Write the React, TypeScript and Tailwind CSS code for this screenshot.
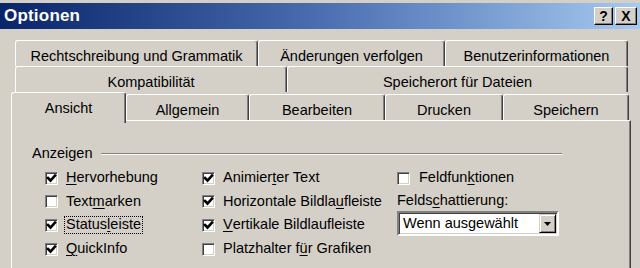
import React from "react";

const tabBase =
  "flex items-center justify-center border-t border-l border-r border-t-white border-l-white border-r-[#404040] shadow-[inset_-1px_0_0_#808080] rounded-t-[3px] bg-[#d4d0c8] text-[14.5px] text-black whitespace-nowrap";

function Check({ checked }: { checked: boolean }) {
  return (
    <div className="w-[13px] h-[13px] shrink-0 bg-white border border-t-[#808080] border-l-[#808080] border-b-white border-r-white shadow-[inset_1px_1px_0_#404040,inset_-1px_-1px_0_#d4d0c8] box-border flex items-center justify-center">
      {checked && (
        <svg width="11" height="11" viewBox="0 0 11 11">
          <polyline points="2,5 4.5,7.5 9,2.5" fill="none" stroke="#000" strokeWidth="2.6" strokeLinecap="square" />
        </svg>
      )}
    </div>
  );
}

function Row({
  checked,
  children,
  h,
  focus,
}: {
  checked: boolean;
  children: React.ReactNode;
  h: string;
  focus?: boolean;
}) {
  return (
    <div className={"flex items-center " + h}>
      <Check checked={checked} />
      <span
        className={
          "ml-[6px] px-[1px] h-[18px] flex items-center whitespace-nowrap border border-dotted " +
          (focus ? "border-black" : "border-transparent")
        }
      >
        {children}
      </span>
    </div>
  );
}

const U = ({ children }: { children: React.ReactNode }) => (
  <span className="underline decoration-1 underline-offset-[2px]">{children}</span>
);

export default function App() {
  return (
    <div className="w-[640px] h-[268px] overflow-hidden bg-[#d4d0c8] font-['Liberation_Sans',Arial,sans-serif] text-black text-[14.5px]">
      {/* Title bar */}
      <div className="mt-[3px] h-[26px] bg-linear-to-r from-[#0a246a] via-[#4a6eb0] to-[#a6caf0] flex items-center justify-between pl-[4px] pr-[3px]">
        <span className="text-white font-bold text-[17px] tracking-[0.2px]">Optionen</span>
        <div className="flex gap-[2px]">
          <div className="w-[19px] h-[18px] bg-[#d4d0c8] border border-t-white border-l-white border-r-black border-b-black shadow-[inset_-1px_-1px_0_#808080] flex items-center justify-center font-bold text-[14px] leading-none">
            ?
          </div>
          <div className="w-[22px] h-[18px] bg-[#d4d0c8] border border-t-white border-l-white border-r-black border-b-black shadow-[inset_-1px_-1px_0_#808080] flex items-center justify-center font-bold text-[14px] leading-none">
            X
          </div>
        </div>
      </div>

      {/* Tabs */}
      <div className="mt-[11px]">
        <div className="flex pl-[15px] h-[26px]">
          <div className={tabBase + " w-[243px] pt-[6px]"}>Rechtschreibung und Grammatik</div>
          <div className={tabBase + " w-[187px] pt-[6px]"}>Änderungen verfolgen</div>
          <div className={tabBase + " w-[183px] pt-[6px]"}>Benutzerinformationen</div>
        </div>
        <div className="flex pl-[15px] h-[26px]">
          <div className={tabBase + " w-[272px] pt-[6px]"}>Kompatibilität</div>
          <div className={tabBase + " w-[341px] pt-[6px]"}>Speicherort für Dateien</div>
        </div>
        <div className="flex items-end pl-[11px] h-[28px]">
          <div className={tabBase + " w-[115px] h-[31px] -mb-[3px] relative z-10 pb-[3px] pt-[4px]"}>Ansicht</div>
          <div className={tabBase + " w-[123px] h-[26px] pt-[6px]"}>Allgemein</div>
          <div className={tabBase + " w-[136px] h-[26px] pt-[6px]"}>Bearbeiten</div>
          <div className={tabBase + " w-[118px] h-[26px] pt-[6px]"}>Drucken</div>
          <div className={tabBase + " w-[126px] h-[26px] pt-[6px]"}>Speichern</div>
        </div>

        {/* Panel */}
        <div className="ml-[11px] w-[620px] h-[160px] border-t border-l border-r border-t-white border-l-white border-r-[#404040] shadow-[inset_-1px_0_0_#808080]">
          <div className="ml-[20px] mt-[25px] w-[530px] h-[16px] flex items-center">
            <span>Anzeigen</span>
            <div className="flex-1 ml-[9px] h-[2px] border-t border-t-[#808080] border-b border-b-white" />
          </div>

          <div className="flex ml-[33px] mt-[4px]">
            <div className="w-[157px] flex flex-col">
              <Row checked h="h-[24px]">
                <U>H</U>ervorhebung
              </Row>
              <Row checked={false} h="h-[23px]">
                Text<U>m</U>arken
              </Row>
              <Row checked h="h-[24px]" focus>
                Status<U>l</U>eiste
              </Row>
              <Row checked h="h-[24px]">
                <U>Q</U>uickInfo
              </Row>
            </div>
            <div className="w-[195px] flex flex-col">
              <Row checked h="h-[24px]">
                Animier<U>t</U>er Text
              </Row>
              <Row checked h="h-[23px]">
                Horizontale Bildla<U>u</U>fleiste
              </Row>
              <Row checked h="h-[24px]">
                <U>V</U>ertikale Bildlaufleiste
              </Row>
              <Row checked={false} h="h-[24px]">
                Platzhalter f<U>ü</U>r Grafiken
              </Row>
            </div>
            <div className="flex flex-col">
              <Row checked={false} h="h-[24px]">
                <span className="ml-[1px]">
                  Feldfun<U>k</U>tionen
                </span>
              </Row>
              <div className="h-[21px] flex items-center whitespace-nowrap">
                Felds<U>c</U>hattierung:
              </div>
              <div className="w-[162px] h-[25px] bg-white border-2 border-t-[#808080] border-l-[#808080] border-b-white border-r-white shadow-[inset_1px_1px_0_#404040,inset_-1px_-1px_0_#d4d0c8] flex items-center box-border">
                <span className="flex-1 pl-[4px] whitespace-nowrap">Wenn ausgewählt</span>
                <div className="w-[17px] h-[19px] mr-[1px] bg-[#d4d0c8] border border-t-[#d4d0c8] border-l-[#d4d0c8] border-r-black border-b-black shadow-[inset_1px_1px_0_#ffffff,inset_-1px_-1px_0_#808080] flex items-center justify-center">
                  <svg width="7" height="4" viewBox="0 0 7 4">
                    <polygon points="0,0 7,0 3.5,4" fill="#000" />
                  </svg>
                </div>
              </div>
            </div>
          </div>
        </div>
      </div>
    </div>
  );
}
